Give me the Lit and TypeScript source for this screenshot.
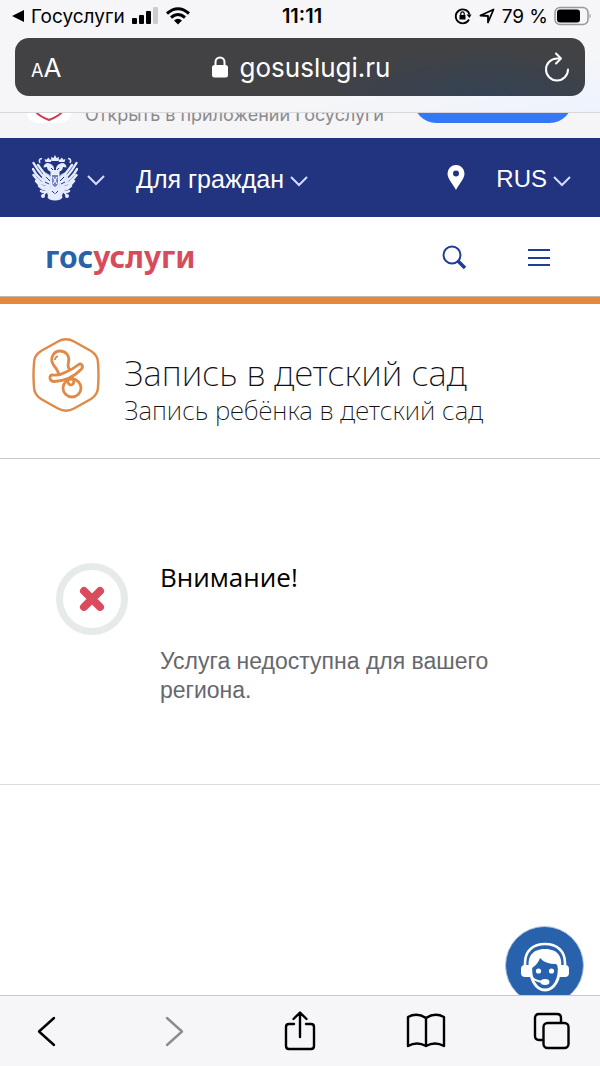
import { LitElement, html, css, svg } from "lit";
import { customElement } from "lit/decorators.js";

const chevron = html`<svg class="chevron" width="18" height="12" viewBox="0 0 18 12" aria-hidden="true">
  <path d="M1 2 9 10 17 2" fill="none" stroke="currentColor" stroke-width="2" />
</svg>`;

const wing = svg`
  <path d="M18 26C12 24 5 14 1.500 8M17 28C10 26 4 20 1 14M17 30C10 30 5 25 1.500 20M17 32C12 33 7 30 4 26M17 34C13 36 10 34 7 31M17 23C12 19 9 14 6 10M18 34C15 38 12 38 9 36"
    fill="none" stroke="currentColor" stroke-width="2.400" stroke-linecap="round" />
  <path d="M12 17Q18 19 20 23L19 33Q14 32 9 25Z" fill="currentColor" opacity=".85" />
  <path d="M22 17Q15 17 15 12L11.500 12.500Q12 8 16 8 21 9 22 13ZM13.500 7h5.500l1-3-2 .8-1.700-2.300-1.800 2.300-2-.8Z" fill="currentColor" />
  <path d="M8 8Q6 4 10 3.500M15 36 10 42" fill="none" stroke="currentColor" stroke-width="1.500" />
  <circle cx="11" cy="41" r="2" fill="currentColor" />
  <path d="M19 32 15 38 17 43 23 44Z" fill="currentColor" />
`;

@customElement("browser-header")
export class BrowserHeader extends LitElement {
  static styles = css`
    :host {
      display: block;
      background: linear-gradient(170deg, #f6f6f8 70%, #edf3fd);
      border-bottom: 1px solid #d8d8dc;
      padding-bottom: 16px;
      color: #000;
      font-family: Inter, "Liberation Sans", sans-serif;
    }
    .status {
      display: grid;
      grid-template-columns: 1fr auto 1fr;
      align-items: center;
      height: 32px;
      padding: 0 8px 0 12px;
      font-size: 19px;
    }
    .left, .right, .place { display: flex; align-items: center; }
    .left { gap: 7px; }
    .right { gap: 6px; justify-content: flex-end; }
    .time { font-weight: 600; font-size: 20px; }
    .bar {
      display: grid;
      grid-template-columns: 1fr auto 1fr;
      align-items: center;
      height: 58px;
      margin: 6px 15px 0;
      padding: 0 14px 0 16px;
      box-sizing: border-box;
      border-radius: 14px;
      background: radial-gradient(ellipse 180px 50px at 82% 100%, #354254, #424244);
      color: #fff;
    }
    button {
      display: flex;
      align-items: baseline;
      padding: 0;
      border: 0;
      background: none;
      color: inherit;
      font: inherit;
    }
    .small { font-size: 18px; }
    .large { font-size: 26px; }
    .place { gap: 12px; font-size: 26px; }
    .reload { justify-self: end; }
  `;

  render() {
    return html`
      <div class="status">
        <div class="left">
          <svg width="12" height="12" viewBox="0 0 12 12"><path d="M0 6 12 0v12Z" /></svg>
          <span>Госуслуги</span>
          <svg width="27" height="18" viewBox="0 0 27 18">
            <rect y="11" width="5" height="6" rx="1" /><rect x="7" y="8" width="5" height="9" rx="1" />
            <rect x="14" y="4" width="5" height="13" rx="1" /><rect x="21" y="0" width="5" height="17" rx="1" fill="#ccc" />
          </svg>
          <svg width="24" height="18" viewBox="0 0 24 18" fill="none" stroke="#000" stroke-width="3">
            <path d="M1 6.500Q12-3 23 6.500M5 10.500Q12 4.500 19 10.500" /><path d="M8 13.500Q12 10 16 13.500L12 17.500Z" fill="#000" stroke="none" />
          </svg>
        </div>
        <span class="time">11:11</span>
        <div class="right">
          <svg width="18" height="18" viewBox="0 0 18 18" fill="none" stroke="#000" stroke-width="1.800">
            <path d="M15 12.500A7 7 0 1 1 15.500 7.500" /><path d="M12.500 7.500h5L15.500 11Z" fill="#000" stroke="none" />
            <rect x="5.500" y="8" width="6" height="4.500" fill="#000" stroke="none" /><path d="M6.800 8V6.500a1.700 1.700 0 0 1 3.400 0V8" stroke-width="1.200" />
          </svg>
          <svg width="18" height="18" viewBox="0 0 18 18" fill="none" stroke="#000" stroke-width="1.800" stroke-linejoin="round">
            <path d="M15.500 2.500 10 15.500V9L2.500 8.500Z" />
          </svg>
          <span>79 %</span>
          <svg width="38" height="20" viewBox="0 0 38 20">
            <rect x="1" y="1.500" width="33" height="17" rx="5" fill="none" stroke="#999" stroke-width="1.500" />
            <rect x="3" y="3.500" width="23" height="13" rx="3" /><path d="M35.500 7.500q2.500 2.500 0 5Z" fill="#999" />
          </svg>
        </div>
      </div>
      <div class="bar">
        <button aria-label="Размер текста"><span class="small">A</span><span class="large">A</span></button>
        <div class="place">
          <svg width="16" height="22" viewBox="0 0 16 22"><rect y="9" width="16" height="12.500" rx="2.500" fill="#fff" /><path d="M3.500 10V6a4.500 4.500 0 0 1 9 0v4" fill="none" stroke="#fff" stroke-width="2" /></svg>
          <span>gosuslugi.ru</span>
        </div>
        <button class="reload" aria-label="Обновить">
          <svg width="28" height="30" viewBox="0 0 28 30" fill="none" stroke="#fff" stroke-width="2" stroke-linecap="round" stroke-linejoin="round">
            <path d="M16.500 6.500H14A11 11 0 1 0 25 17.500" /><path d="M13 1.500 18 6.500 13 11.500" />
          </svg>
        </button>
      </div>
    `;
  }
}

@customElement("site-header")
export class SiteHeader extends LitElement {
  static styles = css`
    :host { display: block; }
    a, button { color: inherit; font: inherit; text-decoration: none; }
    button { display: flex; align-items: center; padding: 0; border: 0; background: none; }
    .promo {
      display: flex;
      align-items: flex-end;
      height: 25px;
      box-sizing: border-box;
      padding: 0 28px 15px 27px;
      overflow: hidden;
      background: #f5f4f6;
      color: #8a8a8e;
      font: 18px/24px Inter, "Liberation Sans", sans-serif;
    }
    .app { flex: none; width: 44px; height: 44px; border-radius: 10px; background: #fff; margin-right: 14px; }
    .promo-text { flex: 1; white-space: nowrap; margin-bottom: -4px; }
    .open { flex: none; width: 158px; height: 44px; border-radius: 22px; background: #3478f6; }
    .top {
      display: flex;
      align-items: center;
      height: 79px;
      padding: 0 29px 0 32px;
      background: #22347f;
      color: #fff;
      font: 25px/32px "Liberation Sans", Arial, sans-serif;
    }
    .chevron { color: #d5dcff; margin-top: 4px; }
    .emblem { gap: 9px; margin-right: 31px; color: #e6ecff; }
    .audience { gap: 6px; padding-top: 2px; }
    .lang { gap: 6px; padding-top: 2px; font-size: 24px; }
    .pin { margin-left: auto; margin-right: 31px; }
    .brand {
      display: flex;
      align-items: center;
      height: 80px;
      box-sizing: border-box;
      padding: 0 50px 0 45px;
      background: #fff;
      color: #1f3f94;
      border-bottom: 1px solid #bfb9b4;
    }
    .logo { margin-right: auto; color: #2862a8; font: 700 30px/40px "Noto Sans", "Open Sans", sans-serif; }
    .logo span { color: #d84b5c; }
    .menu { margin-left: 61px; }
    .stripe { height: 7px; background: #e4883c; }
  `;

  render() {
    return html`
      <div class="promo">
        <svg class="app" viewBox="0 0 44 44"><path d="M9 31V13L22 6l13 7v20q-3 4-13 8-10-4-13-8" fill="none" stroke="#cf3e55" stroke-width="2" /></svg>
        <span class="promo-text">Открыть в приложении Госуслуги</span>
        <a class="open" href="#app" aria-label="Открыть"></a>
      </div>
      <nav class="top">
        <button class="emblem" aria-label="Органы власти">
          <svg width="46" height="46" viewBox="0 0 46 46">
            ${wing}<g transform="matrix(-1 0 0 1 46 0)">${wing}</g>
            <path d="M19.500 6 19 2 21.500 3 23 0 24.500 3 27 2 26.500 6Z" fill="currentColor" />
            <path d="M18.500 15H27.500V32L25 45H21L18.500 32Z" fill="currentColor" />
            <path d="M20 20H26V27Q26 31 23 32 20 31 20 27Z" fill="#7583bd" /><path d="M21 22 25 29M25 22 21 29" stroke="#fff" />
            <path d="M20 36 23 39 26 36M19 13 21 15M27 13 25 15M14 22 18 26M32 22 28 26M13 27 17 29M33 27 29 29" fill="none" stroke="#22347f" />
            <ellipse cx="23" cy="42" rx="7.500" ry="3.500" fill="currentColor" />
          </svg>
          ${chevron}
        </button>
        <button class="audience">Для граждан ${chevron}</button>
        <button class="pin" aria-label="Местоположение">
          <svg width="18" height="26" viewBox="0 0 18 26"><path fill="#fff" fill-rule="evenodd" d="M9 0a8.500 8.500 0 0 1 8.500 8.500C17.500 14 12 19 9 25 6 19 .5 14 .5 8.500A8.500 8.500 0 0 1 9 0Zm0 5.500a3 3 0 1 0 0 6 3 3 0 0 0 0-6Z" /></svg>
        </button>
        <button class="lang">RUS ${chevron}</button>
      </nav>
      <div class="brand">
        <a class="logo" href="#home">гос<span>услуги</span></a>
        <button aria-label="Поиск"><svg width="26" height="26" viewBox="0 0 26 26" fill="none" stroke="currentColor"><circle cx="11" cy="11" r="8.500" stroke-width="2" /><path d="m17 17 7 7" stroke-width="3.500" /></svg></button>
        <button class="menu" aria-label="Меню"><svg width="22" height="20" viewBox="0 0 22 20"><path d="M0 3h22M0 11h22M0 18h22" stroke="currentColor" stroke-width="2" /></svg></button>
      </div>
      <div class="stripe"></div>
    `;
  }
}

@customElement("service-page")
export class ServicePage extends LitElement {
  static styles = css`
    :host { display: block; position: relative; flex: 1; overflow: hidden; background: #fff; }
    h1, h2, p { margin: 0; }
    .hero {
      display: flex;
      align-items: flex-start;
      gap: 24px;
      padding: 34px 32px 32px;
      border-bottom: 1px solid #c9c9c9;
      font-family: "Noto Sans", "Open Sans", sans-serif;
      color: #111;
    }
    .hero svg { flex: none; }
    .titles { padding-top: 14px; }
    h1 { font-size: 35px; line-height: 42px; font-weight: 200; }
    .sub { font-size: 26px; line-height: 32px; font-weight: 200; }
    .alert {
      display: flex;
      align-items: flex-start;
      gap: 32px;
      padding: 104px 56px 79px;
      border-bottom: 1px solid #dcdcdc;
    }
    .alert svg { flex: none; }
    h2 { margin-bottom: 56px; color: #000; font: 500 26px/28px "Open Sans", "Noto Sans", sans-serif; }
    .alert p { color: #66686c; font: 23px/29px "Liberation Sans", Arial, sans-serif; }
    .help {
      position: absolute;
      right: 16px;
      bottom: -10px;
      padding: 0;
      border: 1px solid #b9c9df;
      border-radius: 50%;
      background: #2862ad;
      width: 79px;
      height: 79px;
    }
    .help svg { display: block; margin: auto; }
  `;

  render() {
    return html`
      <section class="hero">
        <svg width="68" height="74" viewBox="0 0 68 74" fill="none" stroke="#df8a48" stroke-width="2.400" stroke-linejoin="round">
          <path d="M26 3.500Q34-1 42 3.500L59 13Q66 17.500 66 25 67 37 66 49 66 56.500 59 61L42 70.500Q34 75 26 70.500L9 61Q2 56.500 2 49 1 37 2 25 2 17.500 9 13Z" />
          <g stroke-width="2.800">
            <path d="M27 36Q25 31 21.500 27C17 20 22 13 28 13 34 13 38 18 36.500 24 35.500 28 36 30 38 32" />
            <path d="M23 22Q23 19 26 18" stroke-width="1.800" />
            <path d="M20 37Q27 38 34 34 41 31 46 27C49 24.500 52 28 49.500 31 43 38 34 43 22 43.500 17 43.500 17 37 20 37Z" />
            <circle cx="40" cy="50" r="9" /><path d="M35 42Q37 49 41 46 43 43 40 39" />
          </g>
        </svg>
        <div class="titles">
          <h1>Запись в детский сад</h1>
          <p class="sub">Запись ребёнка в детский сад</p>
        </div>
      </section>
      <section class="alert">
        <svg width="72" height="72" viewBox="0 0 72 72" fill="none"><circle cx="36" cy="36" r="32.500" stroke="#e6eae9" stroke-width="7" /><path d="M28 28 44 44M44 28 28 44" stroke="#da4b5c" stroke-width="8" stroke-linecap="round" /></svg>
        <div>
          <h2>Внимание!</h2>
          <p>Услуга недоступна для вашего региона.</p>
        </div>
      </section>
      <button class="help" aria-label="Помощь">
        <svg width="58" height="58" viewBox="0 0 58 58">
          <path d="M9 31V26C9 14 17 7 29 7s20 7 20 19v5" fill="none" stroke="#fff" stroke-width="2.600" />
          <path d="M15 27C13 42 20 53 29 53S45 42 43 27" fill="none" stroke="#fff" stroke-width="3" />
          <path d="M13 31C11 18 18 12 29 12S47 18 45 31L42 31Q42 28 40 27 29 27 24 21 22 27 16 31Z" fill="#fff" />
          <path d="M14 28H9q-4 0-4 4v4q0 4 4 4h5ZM44 28H49q4 0 4 4v4q0 4-4 4h-5Z" fill="#fff" />
          <circle cx="22.500" cy="34" r="2.600" fill="#fff" /><circle cx="35.500" cy="34" r="2.600" fill="#fff" />
          <path d="M15 39Q18 44 27 45" fill="none" stroke="#fff" stroke-width="2" />
          <ellipse cx="29" cy="45" rx="4.500" ry="3" fill="#fff" />
        </svg>
      </button>
    `;
  }
}

@customElement("browser-toolbar")
export class BrowserToolbar extends LitElement {
  static styles = css`
    :host { display: block; border-top: 1px solid #c8c8cb; background: #f6f6f8; }
    nav { display: flex; align-items: center; justify-content: space-between; height: 70px; padding: 0 28px; }
    button { display: flex; justify-content: center; width: 40px; padding: 0; border: 0; background: none; color: #000; }
    button:disabled { color: #8c8c8e; }
    svg { fill: none; stroke: currentColor; stroke-width: 2.4; stroke-linecap: round; stroke-linejoin: round; }
  `;

  render() {
    return html`
      <nav>
        <button aria-label="Назад"><svg width="34" height="40" viewBox="0 0 34 40"><path d="M23 7 8 20.500 23 34" /></svg></button>
        <button aria-label="Вперёд" disabled><svg width="34" height="40" viewBox="0 0 34 40"><path d="M10 7 25 20.500 10 34" /></svg></button>
        <button aria-label="Поделиться"><svg width="34" height="42" viewBox="0 0 34 42"><path d="M11 14H6q-3 0-3 3v19q0 3 3 3h22q3 0 3-3V17q0-3-3-3h-5M17 27V3M10.500 9 17 2.500 23.500 9" /></svg></button>
        <button aria-label="Закладки"><svg width="40" height="36" viewBox="0 0 40 36"><path d="M20 5Q11-1 2 4V33Q11 28 20 33 29 28 38 33V4Q29-1 20 5V33" /></svg></button>
        <button aria-label="Вкладки"><svg width="38" height="38" viewBox="0 0 38 38"><rect x="10.500" y="11" width="25" height="25" rx="4" /><path d="M10 28H6q-4 0-4-4V6q0-4 4-4h18q4 0 4 4v4" /></svg></button>
      </nav>
    `;
  }
}

@customElement("app-root")
export class AppRoot extends LitElement {
  static styles = css`
    :host { display: flex; flex-direction: column; min-height: 100vh; background: #fff; }
  `;

  render() {
    return html`
      <browser-header></browser-header>
      <site-header></site-header>
      <service-page></service-page>
      <browser-toolbar></browser-toolbar>
    `;
  }
}
